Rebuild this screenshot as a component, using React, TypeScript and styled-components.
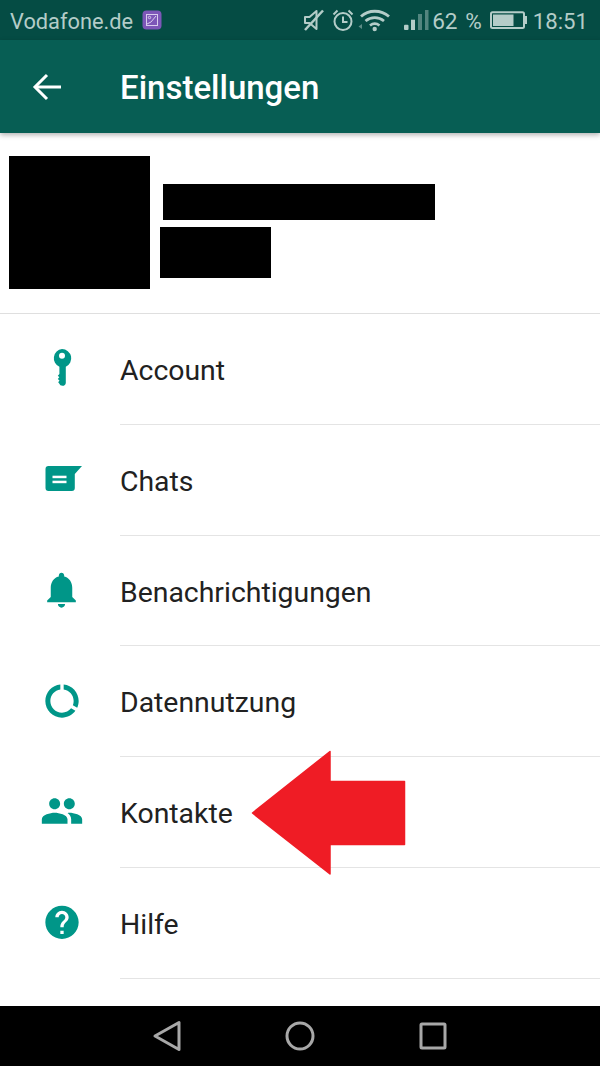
import styled, { createGlobalStyle } from "styled-components";

const GlobalStyle = createGlobalStyle`
  html, body {
    margin: 0;
    padding: 0;
    background: #fff;
  }
  body {
    font-family: Roboto, "Liberation Sans", sans-serif;
  }
`;

const Screen = styled.div`
  position: relative;
  width: 600px;
  height: 1066px;
  display: flex;
  flex-direction: column;
  overflow: hidden;
  background: #fff;
`;

const StatusBar = styled.div`
  height: 40px;
  flex: none;
  box-sizing: border-box;
  display: flex;
  align-items: center;
  justify-content: space-between;
  padding: 2px 12px 0 10px;
  background: #054c44;
  color: #b4ccc8;
  font-size: 22.6px;
`;

const StatusGroup = styled.div`
  display: flex;
  align-items: center;
`;

const Carrier = styled.span`
  font-size: 21.8px;
`;

const Percent = styled.span`
  word-spacing: 2px;
`;

const Clock = styled.span`
  font-size: 22.2px;
`;

const SimBadge = styled.svg`
  margin: -3px 0 0 9px;
`;

const StatusIcon = styled.svg<{ $gap: number }>`
  display: block;
  margin: -2px ${(p) => p.$gap}px 0 0;
`;

const BatteryIcon = styled(StatusIcon)`
  margin-left: 8px;
`;

const AppBar = styled.header`
  position: relative;
  z-index: 1;
  height: 93px;
  flex: none;
  display: flex;
  align-items: center;
  background: #075e54;
  box-shadow: 0 2px 5px rgba(0, 0, 0, 0.3);
`;

const BackSlot = styled.div`
  width: 120px;
  display: flex;
  padding-left: 32px;
  box-sizing: border-box;
`;

const Title = styled.h1`
  margin: 0;
  padding-top: 2px;
  font-size: 33px;
  font-weight: 500;
  color: #fff;
`;

const Profile = styled.section`
  height: 181px;
  flex: none;
  box-sizing: border-box;
  display: flex;
  padding: 23px 0 0 9px;
  border-bottom: 1px solid #dfdfdf;
`;

const Avatar = styled.div`
  width: 141px;
  height: 133px;
  background: #000;
`;

const ProfileText = styled.div`
  display: flex;
  flex-direction: column;
  margin-left: 10px;
  padding-top: 28px;
`;

const RedactedName = styled.div`
  width: 272px;
  height: 36px;
  margin-left: 3px;
  background: #000;
`;

const RedactedStatus = styled.div`
  width: 111px;
  height: 51px;
  margin-top: 7px;
  background: #000;
`;

const List = styled.div`
  flex: 1;
  display: flex;
  flex-direction: column;
`;

const Row = styled.div`
  height: 110.83px;
  flex: none;
  display: flex;
  align-items: center;
`;

const IconSlot = styled.div`
  width: 120px;
  height: 100%;
  flex: none;
  display: flex;
  align-items: center;
  justify-content: center;
  padding-left: 3px;
  box-sizing: border-box;
  color: #009688;
`;

const Label = styled.div`
  flex: 1;
  height: 100%;
  box-sizing: border-box;
  display: flex;
  align-items: center;
  padding-top: 3px;
  border-bottom: 1px solid #e4e4e4;
  font-size: 28.4px;
  color: #212121;
`;

const NavBar = styled.nav`
  height: 60px;
  flex: none;
  display: flex;
  align-items: center;
  justify-content: center;
  background: #000;
`;

const NavCell = styled.div`
  width: 133px;
  display: flex;
  justify-content: center;
`;

const CalloutArrow = styled.svg`
  position: absolute;
  left: 250px;
  top: 749px;
`;

function KeyIcon() {
  return (
    <svg width="40" height="44" viewBox="0 0 40 44" fill="currentColor">
      <path
        fillRule="evenodd"
        d="M20 2.100a9.200 9.200 0 0 1 3.800 17.600V36a3.300 3.300 0 0 1-3.400 2.800 3.400 3.400 0 0 1-3.200-2.400l-1-1.200 1.300-1.600-1.700-1.600 1.500-1.700-1.500-1.500 1.600-1.700V19.700A9.200 9.200 0 0 1 20 2.100zm0 3.600a3 3 0 1 0 0 6 3 3 0 0 0 0-6z"
      />
    </svg>
  );
}

function ChatIcon() {
  return (
    <svg width="40" height="28" viewBox="0 0 40 28" fill="currentColor">
      <path d="M6.500 0H40l-7.200 8v14a3 3 0 0 1-3 3H6.500a3 3 0 0 1-3-3V3a3 3 0 0 1 3-3z" />
      <rect x="10.500" y="9.700" width="14" height="2.500" fill="#fff" />
      <rect x="10.500" y="14.700" width="14" height="2.500" fill="#fff" />
    </svg>
  );
}

function MaterialIcon({ size, d, dy = 0 }: { size: number; d: string; dy?: number }) {
  return (
    <svg width={size} height={size} viewBox={`0 ${dy} 24 24`} fill="currentColor">
      <path d={d} />
    </svg>
  );
}

const BELL =
  "M12 22c1.100 0 2-.9 2-2h-4c0 1.100.89 2 2 2zm6-6v-5c0-3.070-1.640-5.640-4.500-6.320V4c0-.83-.67-1.500-1.500-1.500s-1.500.67-1.500 1.500v.68C7.630 5.360 6 7.920 6 11v5l-2 2v1h16v-1l-2-2z";
const DATA =
  "M13 2.050v3.030c3.390.49 6 3.390 6 6.920 0 .9-.18 1.750-.48 2.540l2.600 1.530c.56-1.240.88-2.620.88-4.070 0-5.180-3.950-9.450-9-9.950zM12 19c-3.870 0-7-3.130-7-7 0-3.530 2.610-6.430 6-6.920V2.050c-5.060.5-9 4.760-9 9.950 0 5.520 4.470 10 9.990 10 3.310 0 6.240-1.610 8.060-4.090l-2.600-1.530C16.170 17.980 14.210 19 12 19z";
const PEOPLE =
  "M16 11c1.660 0 2.990-1.340 2.990-3S17.660 5 16 5c-1.660 0-3 1.340-3 3s1.340 3 3 3zm-8 0c1.660 0 2.990-1.340 2.990-3S9.660 5 8 5C6.340 5 5 6.340 5 8s1.340 3 3 3zm0 2c-2.330 0-7 1.170-7 3.500V19h14v-2.500c0-2.330-4.670-3.500-7-3.500zm8 0c-.29 0-.62.02-.97.05 1.160.84 1.970 1.970 1.970 3.450V19h6v-2.500c0-2.330-4.670-3.500-7-3.500z";
const HELP =
  "M12 2C6.480 2 2 6.480 2 12s4.480 10 10 10 10-4.480 10-10S17.520 2 12 2zm1 17h-2v-2h2v2zm2.070-7.750l-.9.92C13.450 12.900 13 13.500 13 15h-2v-.5c0-1.100.45-2.100 1.170-2.830l1.240-1.260c.37-.36.59-.86.59-1.410 0-1.100-.9-2-2-2s-2 .9-2 2H8c0-2.210 1.790-4 4-4s4 1.790 4 4c0 .88-.36 1.680-.93 2.250z";

const rows = [
  { label: "Account", icon: <KeyIcon /> },
  { label: "Chats", icon: <ChatIcon /> },
  { label: "Benachrichtigungen", icon: <MaterialIcon size={43} d={BELL} dy={1} /> },
  { label: "Datennutzung", icon: <MaterialIcon size={40} d={DATA} dy={0.6} /> },
  { label: "Kontakte", icon: <MaterialIcon size={44} d={PEOPLE} dy={1.1} /> },
  { label: "Hilfe", icon: <MaterialIcon size={40} d={HELP} dy={1} /> },
];

export default function App() {
  return (
    <Screen>
      <GlobalStyle />
      <StatusBar>
        <StatusGroup>
          <Carrier>Vodafone.de</Carrier>
          <SimBadge width="20" height="20" viewBox="0 0 20 20">
            <rect width="19" height="19" x="0.500" y="0.500" rx="4" fill="#7d57b8" />
            <rect x="4.500" y="4.500" width="11" height="11" fill="none" stroke="#d9cdee" strokeWidth="1" />
            <circle cx="7.500" cy="7.500" r="1.200" fill="none" stroke="#d9cdee" />
            <path d="M5 14l4-2 5-6" fill="none" stroke="#d9cdee" />
          </SimBadge>
        </StatusGroup>
        <StatusGroup>
          <StatusIcon $gap={7} width="22" height="24" viewBox="0 0 22 24" fill="none" stroke="currentColor" strokeWidth="2">
            <path d="M3 9h4.500l7-6v18l-7-6H3z" strokeLinejoin="round" />
            <path d="M21 2.500L3 22" strokeWidth="2.500" />
          </StatusIcon>
          <StatusIcon $gap={3} width="24" height="24" viewBox="0 0 24 24" fill="none" stroke="currentColor" strokeWidth="2">
            <circle cx="12" cy="13.500" r="8.500" />
            <path d="M12 8.500v5.500h4.500" />
            <path d="M2.500 6.500l4-4M21.500 6.500l-4-4" />
          </StatusIcon>
          <StatusIcon $gap={14} width="32" height="24" viewBox="0 0 32 24" fill="none" stroke="currentColor" strokeWidth="2.800">
            <path d="M3 8.500C10.500 1.500 23 1.500 31 8.500" />
            <path d="M7.500 13c5.500-4.500 13-4.500 18.500 0" />
            <path d="M12 17.500c3-2.300 6.500-2.300 9.500 0" />
            <circle cx="16.700" cy="21" r="2.200" fill="currentColor" stroke="none" />
            <path d="M0.500 18.500l3.500-2.500v5z" fill="currentColor" stroke="none" opacity="0.5" />
          </StatusIcon>
          <StatusIcon $gap={3} width="25" height="22" viewBox="0 0 25 22" fill="currentColor">
            <rect x="0" y="15.700" width="4.500" height="5.300" rx="1" />
            <rect x="7" y="10.700" width="4" height="10.300" />
            <rect x="14" y="5" width="4" height="16" opacity="0.45" />
            <rect x="21" y="1" width="3.500" height="20" opacity="0.45" />
          </StatusIcon>
          <Percent>62 %</Percent>
          <BatteryIcon $gap={6} width="37" height="20" viewBox="0 0 37 20">
            <rect x="1" y="2.300" width="33" height="15.700" rx="1.500" fill="none" stroke="currentColor" strokeWidth="2" />
            <rect x="3" y="4.500" width="20.500" height="11.500" fill="currentColor" />
            <rect x="35" y="6" width="2" height="8" fill="currentColor" />
          </BatteryIcon>
          <Clock>18:51</Clock>
        </StatusGroup>
      </StatusBar>

      <AppBar>
        <BackSlot>
          <svg width="30" height="30" viewBox="0 0 30 30" fill="none" stroke="#fff" strokeWidth="3">
            <path d="M29 15H3" />
            <path d="M15 3L3 15l12 12" />
          </svg>
        </BackSlot>
        <Title>Einstellungen</Title>
      </AppBar>

      <Profile>
        <Avatar />
        <ProfileText>
          <RedactedName />
          <RedactedStatus />
        </ProfileText>
      </Profile>

      <List>
        {rows.map((row) => (
          <Row key={row.label}>
            <IconSlot>{row.icon}</IconSlot>
            <Label>{row.label}</Label>
          </Row>
        ))}
      </List>

      <NavBar>
        <NavCell>
          <svg width="30" height="32" viewBox="0 0 30 32" fill="none" stroke="#a8a8a8" strokeWidth="3" strokeLinejoin="round">
            <path d="M27 2.500v27L3 16z" />
          </svg>
        </NavCell>
        <NavCell>
          <svg width="30" height="30" viewBox="0 0 30 30" fill="none" stroke="#a8a8a8" strokeWidth="3">
            <circle cx="15" cy="15" r="13" />
          </svg>
        </NavCell>
        <NavCell>
          <svg width="28" height="28" viewBox="0 0 28 28" fill="none" stroke="#a8a8a8" strokeWidth="3" strokeLinejoin="round">
            <rect x="2" y="2" width="24" height="24" rx="1" />
          </svg>
        </NavCell>
      </NavBar>

      <CalloutArrow width="158" height="128" viewBox="0 0 158 128">
        <path d="M2.500 64L80 2.500V32.500h74.500v63H80v29.500z" fill="#ef1c25" stroke="#ef1c25" strokeWidth="1.500" strokeLinejoin="round" />
      </CalloutArrow>
    </Screen>
  );
}
